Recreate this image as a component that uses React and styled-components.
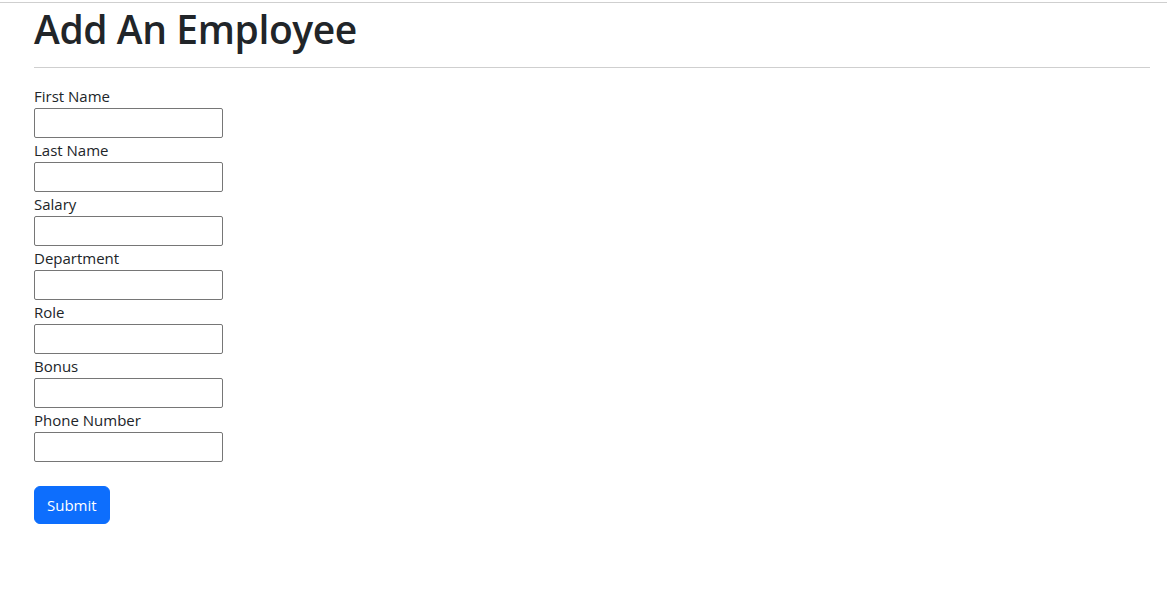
import React from "react";
import styled, { createGlobalStyle } from "styled-components";

const GlobalStyle = createGlobalStyle`
  body {
    margin: 0;
    font-family: "Open Sans", "Noto Sans", "Liberation Sans", sans-serif;
    color: #212529;
    background: #fff;
  }
`;

const TopRule = styled.div`
  margin-top: 2px;
  border-top: 1px solid #cfcfcf;
`;

const Page = styled.div`
  padding: 0 17px 0 34px;
`;

const Title = styled.h1`
  margin: 0;
  padding-top: 2px;
  font-size: 39px;
  font-weight: 600;
  line-height: 48px;
  letter-spacing: -0.4px;
`;

const Divider = styled.hr`
  margin: 14px 0 16px;
  border: 0;
  border-top: 1px solid #cfcfcf;
`;

const Form = styled.form`
  display: flex;
  flex-direction: column;
  align-items: flex-start;
`;

const Label = styled.label`
  display: block;
  font-size: 15px;
  line-height: 24px;
`;

const Input = styled.input`
  box-sizing: border-box;
  display: block;
  width: 189px;
  height: 30px;
  margin: 0;
  border: 1px solid #767676;
  border-radius: 2px;
  font: inherit;
`;

const SubmitButton = styled.button`
  margin-top: 24px;
  box-sizing: border-box;
  height: 38px;
  padding: 0 12px;
  border: 1px solid #0d6efd;
  border-radius: 6px;
  background: #0d6efd;
  color: #fff;
  font-family: inherit;
  font-size: 15px;
  line-height: 24px;
  cursor: pointer;
`;

const fields = [
  "First Name",
  "Last Name",
  "Salary",
  "Department",
  "Role",
  "Bonus",
  "Phone Number",
];

const App = () => {
  return (
    <>
      <GlobalStyle />
      <TopRule />
      <Page>
        <Title>Add An Employee</Title>
        <Divider />
        <Form onSubmit={(e) => e.preventDefault()}>
          {fields.map((f) => (
            <div key={f}>
              <Label htmlFor={f}>{f}</Label>
              <Input id={f} type="text" />
            </div>
          ))}
          <SubmitButton type="submit">Submit</SubmitButton>
        </Form>
      </Page>
    </>
  );
};

export default App;
